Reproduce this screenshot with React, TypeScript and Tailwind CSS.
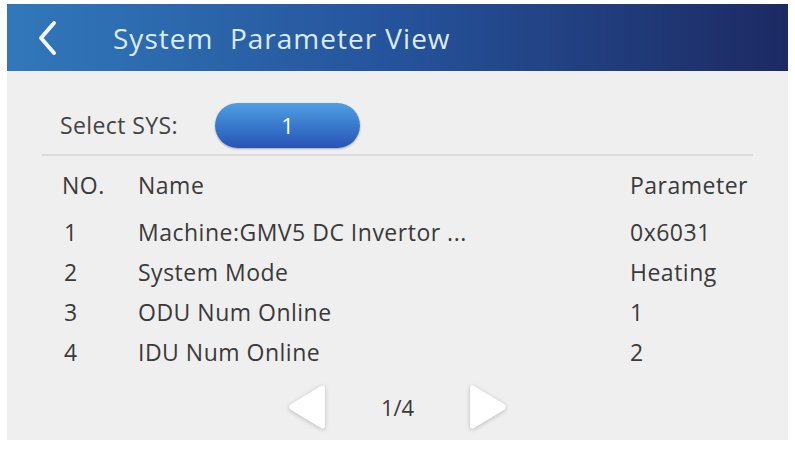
const rows = [
  { no: "1", name: "Machine:GMV5 DC Invertor ...", value: "0x6031" },
  { no: "2", name: "System Mode", value: "Heating" },
  { no: "3", name: "ODU Num Online", value: "1" },
  { no: "4", name: "IDU Num Online", value: "2" },
];

function Triangle({ dir }: { dir: "left" | "right" }) {
  const d =
    dir === "left"
      ? "M36 4 Q40 2 40 7 L40 43 Q40 48 36 46 L6 28 Q2 25 6 22 Z"
      : "M8 4 Q4 2 4 7 L4 43 Q4 48 8 46 L38 28 Q42 25 38 22 Z";
  return (
    <svg width="44" height="50" viewBox="0 0 44 50" className="drop-shadow-[0_1px_2px_rgba(0,0,0,0.22)]">
      <path d={d} fill="#ffffff" />
    </svg>
  );
}

export default function App() {
  return (
    <div
      className="w-[795px] h-[449px] bg-white pt-[4px] px-[7px]"
      style={{ fontFamily: '"Open Sans", "Noto Sans", sans-serif' }}
    >
      <div className="h-[436px] bg-[#efefef] flex flex-col">
        {/* Header */}
        <div className="h-[67px] flex items-center bg-gradient-to-r from-[#3178ba] via-[#25539b] to-[#1c2a63]">
          <svg width="22" height="36" viewBox="0 0 22 36" className="ml-[30px]">
            <polyline
              points="17,3 4,18 17,33"
              fill="none"
              stroke="#f2f7fc"
              strokeWidth="4"
              strokeLinecap="round"
              strokeLinejoin="round"
            />
          </svg>
          <span className="ml-[54px] text-[28px] text-[#dcebf8] tracking-[1px]">System&nbsp; Parameter View</span>
        </div>

        {/* Select SYS */}
        <div className="flex items-center h-[83px] pt-[26px] pl-[53px]">
          <span className="text-[23px] text-[#444] tracking-[0.4px]">Select SYS:</span>
          <button className="ml-[37px] w-[145px] h-[45px] rounded-full bg-gradient-to-b from-[#4f9fe3] to-[#2853b6] text-white text-[22px] shadow-[0_1px_2px_rgba(0,0,0,0.3)]">
            1
          </button>
        </div>
        <div className="mx-[35px] h-[2px] bg-[#dcdcdc]" />

        {/* Table */}
        <div className="pl-[55px] pr-[30px] text-[23px] text-[#3a3a3a] tracking-[0.5px]">
          <div className="flex items-center h-[56px] pt-[2px]">
            <span className="w-[76px]">NO.</span>
            <span className="flex-1">Name</span>
            <span className="w-[128px] whitespace-nowrap">Parameter</span>
          </div>
          {rows.map((r) => (
            <div key={r.no} className="flex items-center h-[40px]">
              <span className="w-[76px] pl-[2px]">{r.no}</span>
              <span className="flex-1 whitespace-nowrap">{r.name}</span>
              <span className="w-[128px]">{r.value}</span>
            </div>
          ))}
        </div>

        {/* Pagination */}
        <div className="flex items-center justify-center mt-[10px] gap-[52px]">
          <Triangle dir="left" />
          <span className="text-[22px] text-[#3a3a3a] font-medium">1/4</span>
          <Triangle dir="right" />
        </div>
      </div>
    </div>
  );
}
